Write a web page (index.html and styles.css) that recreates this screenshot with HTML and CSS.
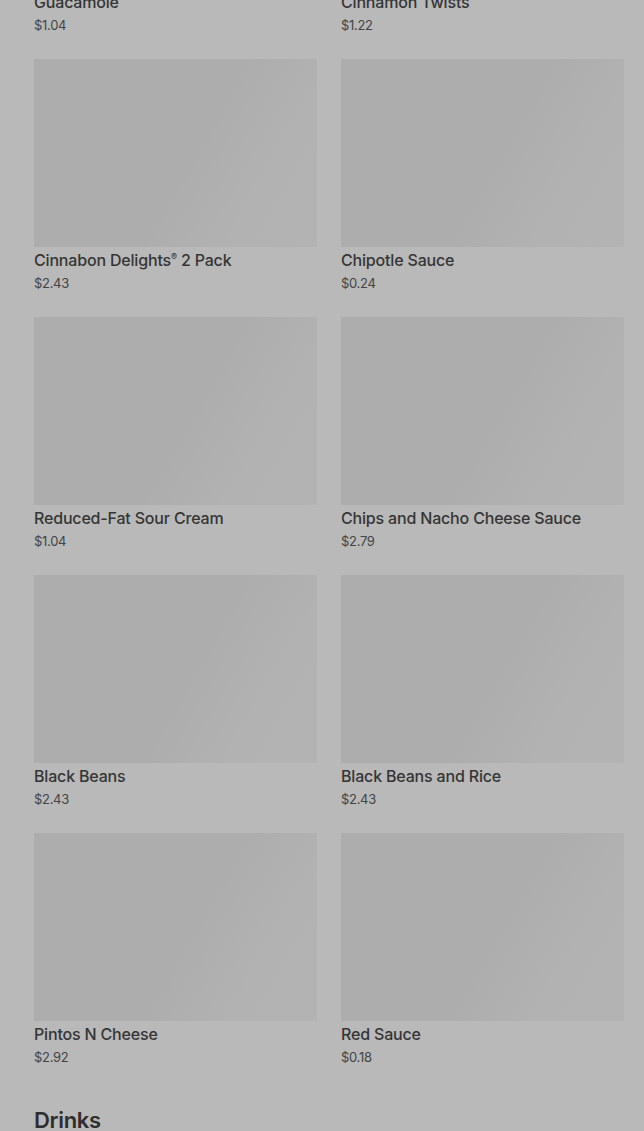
FILE: index.html
```html
<!DOCTYPE html>
<html lang="en">

<head>
    <meta charset="UTF-8">
    <meta name="viewport" content="width=device-width, initial-scale=1.0">
    <title>Menu - Sides</title>
    <link rel="stylesheet" href="styles.css">
</head>

<body>
    <div class="page">
        <div class="grid">
            <div class="card">
                <div class="thumb"></div>
                <h3>Guacamole</h3>
                <p class="price">$1.04</p>
            </div>
            <div class="card">
                <div class="thumb"></div>
                <h3>Cinnamon Twists</h3>
                <p class="price">$1.22</p>
            </div>
            <div class="card">
                <div class="thumb"></div>
                <h3>Cinnabon Delights<sup>®</sup> 2 Pack</h3>
                <p class="price">$2.43</p>
            </div>
            <div class="card">
                <div class="thumb"></div>
                <h3>Chipotle Sauce</h3>
                <p class="price">$0.24</p>
            </div>
            <div class="card">
                <div class="thumb"></div>
                <h3>Reduced-Fat Sour Cream</h3>
                <p class="price">$1.04</p>
            </div>
            <div class="card">
                <div class="thumb"></div>
                <h3>Chips and Nacho Cheese Sauce</h3>
                <p class="price">$2.79</p>
            </div>
            <div class="card">
                <div class="thumb"></div>
                <h3>Black Beans</h3>
                <p class="price">$2.43</p>
            </div>
            <div class="card">
                <div class="thumb"></div>
                <h3>Black Beans and Rice</h3>
                <p class="price">$2.43</p>
            </div>
            <div class="card">
                <div class="thumb"></div>
                <h3>Pintos N Cheese</h3>
                <p class="price">$2.92</p>
            </div>
            <div class="card">
                <div class="thumb"></div>
                <h3>Red Sauce</h3>
                <p class="price">$0.18</p>
            </div>
        </div>

        <h2 class="section-title">Drinks</h2>
    </div>
</body>

</html>
```

FILE: styles.css
```css
* {
    margin: 0;
    padding: 0;
    box-sizing: border-box;
}

body {
    background: #b9b9b9;
    font-family: Inter, "Liberation Sans", sans-serif;
    color: #333;
    overflow: hidden;
}

.page {
    padding: 0 20px 0 34px;
    margin-top: -199px;
}

.grid {
    display: grid;
    grid-template-columns: 1fr 1fr;
    column-gap: 24px;
    row-gap: 23px;
}

.thumb {
    height: 188px;
    background: linear-gradient(120deg, #adadad 0%, #adadad 55%, #b2b2b2 78%, #b3b3b3 100%);
}

.card h3 {
    margin-top: 2px;
    font-size: 16px;
    font-weight: 500;
    line-height: 22px;
    letter-spacing: -0.18px;
    color: #353535;
}

.card h3 sup {
    font-size: 9px;
    vertical-align: 6px;
    line-height: 0;
}

.price {
    margin-top: 1px;
    font-size: 13px;
    line-height: 22px;
    color: #444;
    letter-spacing: -0.3px;
}

.section-title {
    margin-top: 38px;
    font-size: 22px;
    font-weight: 600;
    line-height: 28px;
    color: #2e2e2e;
    letter-spacing: -0.3px;
}
```
